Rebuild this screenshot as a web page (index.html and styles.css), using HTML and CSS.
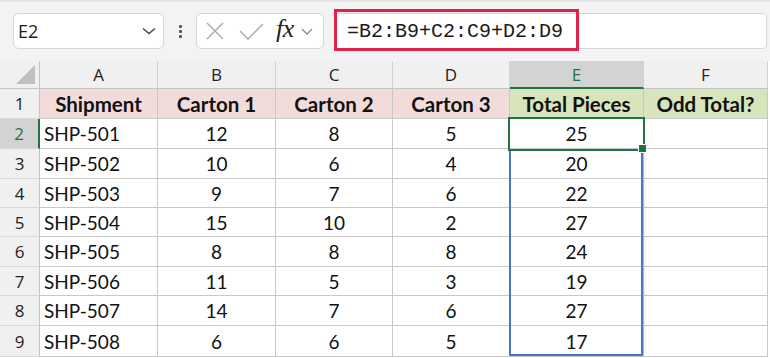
FILE: index.html
```html
<!DOCTYPE html>
<html>
<head>
<meta charset="utf-8">
<link rel="stylesheet" href="styles.css">
</head>
<body>
<div class="toolbar">
  <div class="namebox">
    <span class="ref">E2</span>
    <svg class="chev" width="14" height="8" viewBox="0 0 14 8"><path d="M1 1.5 L7 6.5 L13 1.5" fill="none" stroke="#444" stroke-width="1.4"/></svg>
  </div>
  <div class="dots"><i></i><i></i><i></i></div>
  <div class="fxbox">
    <svg class="ico-x" width="18" height="18" viewBox="0 0 18 18"><path d="M1 1 L17 17 M17 1 L1 17" stroke="#a8a8a8" stroke-width="1.4" fill="none"/></svg>
    <svg class="ico-ok" width="25" height="17" viewBox="0 0 25 17"><path d="M1 8 L9 16 L24 1" stroke="#a8a8a8" stroke-width="1.4" fill="none"/></svg>
    <span class="fx">fx</span>
    <svg class="chev2" width="12" height="7" viewBox="0 0 12 7"><path d="M1 1 L6 6 L11 1" fill="none" stroke="#8a8a8a" stroke-width="1.3"/></svg>
  </div>
  <div class="formula">
    <span class="ftext">=B2:B9+C2:C9+D2:D9</span>
    <div class="mark"></div>
  </div>
</div>
<div class="sheet">
  <div class="h corner"><span class="tri"></span></div>
  <div class="h">A</div><div class="h">B</div><div class="h">C</div><div class="h">D</div><div class="h hsel">E</div><div class="h">F</div>

  <div class="r">1</div>
  <div class="c th pink">Shipment</div><div class="c th pink">Carton 1</div><div class="c th pink">Carton 2</div><div class="c th pink">Carton 3</div><div class="c th green">Total Pieces</div><div class="c th green">Odd Total?</div>

  <div class="r rsel">2</div>
  <div class="c l">SHP-501</div><div class="c">12</div><div class="c">8</div><div class="c">5</div><div class="c anchor">25<span class="active"><span class="handle"></span></span></div><div class="c"></div>

  <div class="r">3</div>
  <div class="c l">SHP-502</div><div class="c">10</div><div class="c">6</div><div class="c">4</div><div class="c anchor">20<span class="spill"></span></div><div class="c"></div>

  <div class="r">4</div>
  <div class="c l">SHP-503</div><div class="c">9</div><div class="c">7</div><div class="c">6</div><div class="c">22</div><div class="c"></div>

  <div class="r">5</div>
  <div class="c l">SHP-504</div><div class="c">15</div><div class="c">10</div><div class="c">2</div><div class="c">27</div><div class="c"></div>

  <div class="r">6</div>
  <div class="c l">SHP-505</div><div class="c">8</div><div class="c">8</div><div class="c">8</div><div class="c">24</div><div class="c"></div>

  <div class="r">7</div>
  <div class="c l">SHP-506</div><div class="c">11</div><div class="c">5</div><div class="c">3</div><div class="c">19</div><div class="c"></div>

  <div class="r">8</div>
  <div class="c l">SHP-507</div><div class="c">14</div><div class="c">7</div><div class="c">6</div><div class="c">27</div><div class="c"></div>

  <div class="r">9</div>
  <div class="c l">SHP-508</div><div class="c">6</div><div class="c">6</div><div class="c">5</div><div class="c">17</div><div class="c"></div>
</div>
</body>
</html>
```
FILE: styles.css
```css
html, body {
  margin: 0;
  padding: 0;
  background: #ffffff;
}
body {
  width: 770px;
  height: 358px;
  overflow: hidden;
  font-family: "Open Sans", sans-serif;
}
.toolbar {
  height: 61px;
  box-sizing: border-box;
  background: #f3f3f3;
  border-top: 2px solid #e3e3e3;
  display: flex;
  align-items: flex-start;
  padding: 11px 3px 0 13px;
}
.namebox {
  width: 151px;
  height: 36px;
  box-sizing: border-box;
  background: #fff;
  border: 1px solid #d6d6d6;
  border-radius: 6px;
  display: flex;
  align-items: center;
  justify-content: space-between;
  padding: 0 7px 0 4px;
}
.ref {
  font-size: 18px;
  color: #1a1a1a;
}
.dots {
  width: 32px;
  height: 36px;
  display: flex;
  flex-direction: column;
  align-items: center;
  justify-content: center;
  gap: 2px;
}
.dots i {
  display: block;
  width: 3px;
  height: 3px;
  border-radius: 1px;
  background: #555;
}
.fxbox {
  width: 128px;
  height: 36px;
  box-sizing: border-box;
  background: #fff;
  border: 1px solid #d6d6d6;
  border-radius: 6px;
  display: flex;
  align-items: center;
  padding-left: 9px;
}
.ico-x { margin-right: 15px; }
.ico-ok { margin-right: 12px; }
.fx {
  font-family: "Liberation Serif", serif;
  font-style: italic;
  font-size: 26px;
  color: #222;
  line-height: 1;
  margin-top: -4px;
  margin-right: 7px;
  letter-spacing: -0.5px;
}
.formula {
  flex: 1;
  height: 36px;
  margin-left: 10px;
  box-sizing: border-box;
  background: #fff;
  border: 1px solid #d6d6d6;
  border-radius: 4px;
  position: relative;
  display: flex;
  align-items: center;
  padding-left: 12px;
}
.ftext {
  font-family: "Liberation Mono", monospace;
  font-size: 20px;
  color: #1a1a1a;
}
.mark {
  position: absolute;
  left: -1px;
  top: -5px;
  width: 245px;
  height: 42px;
  box-sizing: border-box;
  border: 3px solid #e2204c;
}
.sheet {
  display: grid;
  grid-template-columns: 40px 118px 118px 117px 117px 134px 124px;
  grid-template-rows: 28px 30px 30px 30px 29px 29px 30px 29px 30px 31px;
  width: 768px;
}
.sheet > div {
  box-sizing: border-box;
}
.h {
  background: #f0f0f0;
  border-right: 1px solid #d2d2d2;
  border-bottom: 1px solid #c4c4c4;
  display: flex;
  align-items: center;
  justify-content: center;
  font-size: 17px;
  color: #222;
}
.hsel {
  background: #d3d3d3;
  color: #217346;
  border-bottom: 2px solid #217346;
}
.corner {
  position: relative;
  border-right-color: #c4c4c4;
}
.tri {
  position: absolute;
  right: 4px;
  bottom: 4px;
  width: 0;
  height: 0;
  border-left: 19px solid transparent;
  border-bottom: 19px solid #c0c0c0;
}
.r {
  background: #f0f0f0;
  border-right: 1px solid #c4c4c4;
  border-bottom: 1px solid #d8d8d8;
  display: flex;
  align-items: center;
  justify-content: center;
  font-size: 17px;
  color: #222;
}
.rsel {
  background: #d3d3d3;
  color: #217346;
  border-right: 2px solid #217346;
}
.c {
  border-right: 1px solid #c8c8c8;
  border-bottom: 1px solid #c8c8c8;
  display: flex;
  align-items: center;
  justify-content: center;
  font-family: "Lato", sans-serif;
  font-size: 19px;
  color: #111;
}
.c.l {
  justify-content: flex-start;
  padding-left: 4px;
}
.th {
  font-weight: bold;
  font-size: 20.5px;
}
.pink { background: #f2dcdb; }
.green { background: #d8e4bc; }
.anchor {
  position: relative;
}
.spill {
  position: absolute;
  left: -1px;
  top: 0;
  width: 134px;
  height: 207px;
  box-sizing: border-box;
  border: 2px solid #4a76c6;
  border-top: none;
  box-shadow: 3px 0 4px -2px rgba(0,0,0,0.12);
}
.active {
  position: absolute;
  left: -2px;
  top: -2px;
  width: 137px;
  height: 34px;
  box-sizing: border-box;
  border: 2px solid #217346;
  z-index: 2;
}
.handle {
  position: absolute;
  right: -4px;
  bottom: -4px;
  width: 7px;
  height: 7px;
  background: #217346;
  border: 1px solid #fff;
}
```
